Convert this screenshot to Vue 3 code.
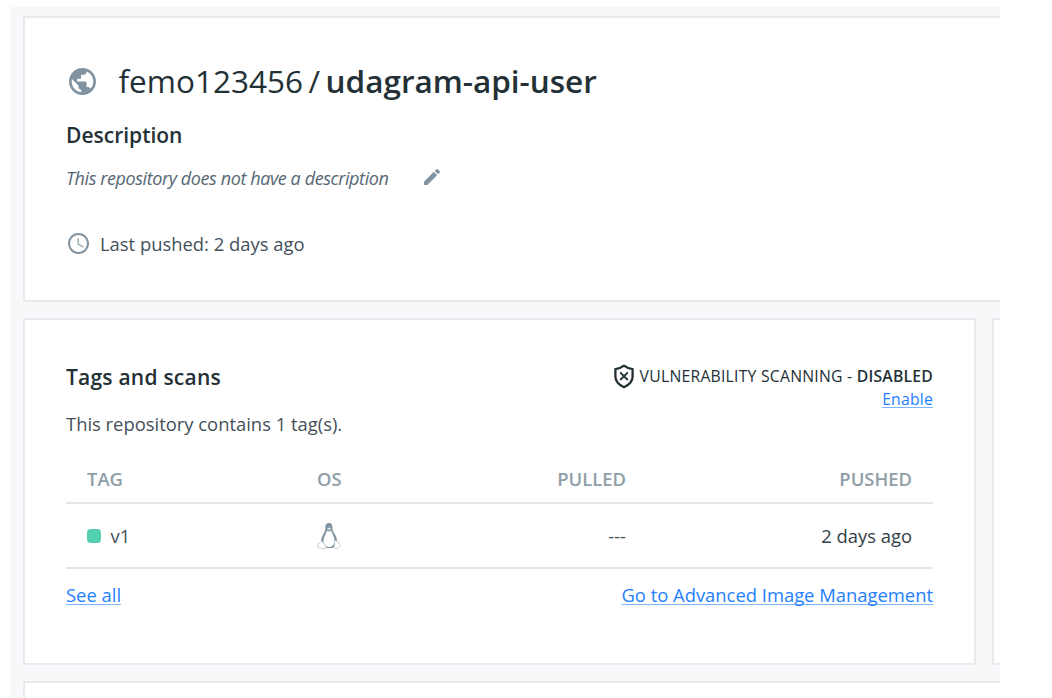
<script setup>
const columns = ['TAG', 'OS', 'PULLED', 'PUSHED']
</script>

<template>
  <main class="page">
    <section class="card overview">
      <h1 class="title">
        <svg class="globe" viewBox="2 2 20 20"><path d="M12 2C6.48 2 2 6.48 2 12s4.48 10 10 10 10-4.48 10-10S17.52 2 12 2zm-1 17.93c-3.95-.49-7-3.85-7-7.93 0-.62.08-1.21.21-1.79L9 15v1c0 1.1.9 2 2 2v1.930zm6.9-2.540c-.26-.81-1-1.39-1.9-1.390h-1v-3c0-.55-.45-1-1-1H8v-2h2c.55 0 1-.45 1-1V7h2c1.100 0 2-.9 2-2v-.41c2.930 1.190 5 4.060 5 7.410 0 2.080-.8 3.970-2.100 5.390z" /></svg>
        <span class="owner">femo123456</span><span class="slash">/</span><span class="repo">udagram-api-user</span>
      </h1>
      <h2 class="heading label"><span>Description</span></h2>
      <div class="description">
        <em>This repository does not have a description</em>
        <svg class="pencil" viewBox="3 3 18 18"><path d="M3 17.25V21h3.75L17.81 9.94l-3.75-3.75L3 17.25zM20.71 7.04c.39-.39.39-1.02 0-1.41l-2.34-2.34c-.39-.39-1.02-.39-1.41 0l-1.83 1.83 3.75 3.75 1.83-1.83z" /></svg>
      </div>
      <div class="pushed">
        <svg class="clock" viewBox="2 2 20 20"><path d="M11.99 2C6.47 2 2 6.48 2 12s4.47 10 9.99 10C17.52 22 22 17.52 22 12S17.52 2 11.99 2zM12 20c-4.42 0-8-3.58-8-8s3.58-8 8-8 8 3.58 8 8-3.58 8-8 8z" /><path class="hands" d="M12.5 7H11v6l5.25 3.15.75-1.23-4.5-2.67z" /></svg>
        <span>Last pushed: 2 days ago</span>
      </div>
    </section>

    <div class="row">
      <section class="card tags">
        <header class="tags-head">
          <h2 class="heading wide"><span>Tags and scans</span></h2>
          <div class="scan">
            <div class="scan-status">
              <svg class="shield" viewBox="0 0 22 25"><path d="M11 1.600c2.500 2 5.500 3 8.600 3.500v7.700c0 5-3.900 8.200-8.600 10.400-4.700-2.200-8.600-5.400-8.600-10.400V5.100C5.500 4.600 8.500 3.600 11 1.600z" /><path class="cross" d="M7.200 8.400l7.600 7.600M14.800 8.400l-7.600 7.600" /></svg>
              <span class="scan-name">VULNERABILITY SCANNING - </span><span class="disabled">DISABLED</span>
            </div>
            <a class="enable">Enable</a>
          </div>
        </header>
        <p class="count"><span>This repository contains 1 tag(s).</span></p>
        <div class="line thead">
          <span v-for="c in columns" :key="c">{{ c }}</span>
        </div>
        <div class="line trow">
          <span class="tag"><i class="dot"></i>v1</span>
          <span class="os">
            <svg class="tux" viewBox="0 0 24 28">
              <path class="body" d="M12 1C9 1 8.200 3.200 8.400 6c.1 2.500-1 4.200-2.300 6.500C4.700 15 3.900 17.500 4 20.500L8.500 26h7.500l4.200-5.500c0-3-.8-5.600-2.300-8-1.500-2.300-2.400-4-2.400-6.500C15.500 3.100 14.800 1 12 1z" />
              <path class="belly" d="M10 8.500c1.500 1.500 3 1 4.200 0 .6 3 3.300 6 3.300 10.500 0 3-2 6-5.500 6s-5.500-3-5.500-6c0-4 2.900-7.500 3.500-10.500z" />
              <path class="face" d="M10 6.700l2-1.300 2.300 1.200-2.200 1.700z" />
              <path class="foot" d="M4.700 18.700l4.200 5.800c.4 1.800-.7 2.800-2.500 2.400L1.400 25.600c-1-.4-.1-1.600-.4-3-.1-1.200.7-1.500 1.800-1.700.7-.2.900-2 1.900-2.200zM18.900 18.700c-1.200-.2-1.500.8-1.500 2v4c0 2 1.300 2.900 3 1.800l2.400-2c1-.8.5-1.400-.4-2.200-.6-.6 0-1.900-1-2.200-.9 0-1.300-1.300-2.500-1.400z" />
            </svg>
          </span>
          <span>---</span>
          <span class="ago">2 days ago</span>
        </div>
        <footer class="links">
          <a class="all">See all</a>
          <a class="manage">Go to Advanced Image Management</a>
        </footer>
      </section>
      <section class="card side"></section>
    </div>
    <section class="card next"></section>
  </main>
</template>

<style>
html, body { background: #fff; overflow: hidden; }
</style>

<style scoped>
.page {
  box-sizing: border-box;
  width: 990px;
  height: 691px;
  margin: 7px 0 0 10px;
  padding: 9px 0 0 13px;
  overflow: hidden;
  background: #f7f8fa;
  color: #445058;
  font: 18.4px/26px "Open Sans", "Noto Sans", sans-serif;
}
.card {
  box-sizing: border-box;
  background: #fff;
  border: 2px solid #e8eaed;
  border-radius: 2px;
}
.overview {
  height: 286px;
  padding: 44px 41px 0;
  border-right: 0;
  border-radius: 2px 0 0 2px;
}
.title {
  display: flex;
  align-items: center;
  height: 38px;
  margin: 0;
  color: #233137;
  font-size: 31.5px;
  font-weight: 400;
  line-height: 38px;
  white-space: nowrap;
}
.title svg, .pencil, .clock { fill: #8193a0; flex: none; }
.globe { width: 27px; height: 27px; margin: 0 22.5px 0 3px; }
.slash { margin: 0 5.5px; }
.repo { font-weight: 600; }
.heading {
  margin: 0;
  color: #233137;
  font-size: 21px;
  font-weight: 600;
  line-height: 30px;
}
.wide { letter-spacing: 0.22px; }
.label { margin-top: 20px; }
.description {
  display: flex;
  align-items: center;
  margin-top: 15px;
  color: #556775;
}
.description em { font-size: 18px; letter-spacing: -0.41px; }
.pencil { width: 16px; height: 16px; margin: -2px 0 0 36px; }
.pushed {
  display: flex;
  align-items: center;
  gap: 11px;
  margin-top: 40px;
}
.clock { width: 21px; height: 21px; margin: -1px 0 0 2px; }
.clock .hands { opacity: 0.75; }
.row { display: flex; gap: 16px; margin-top: 15.5px; }
.tags { flex: none; width: 953px; height: 347px; padding: 42px 41px 0; }
.side { flex: 1; border-right: 0; border-radius: 2px 0 0 2px; }
.next { height: 60px; margin-top: 16px; border-right: 0; }
.tags-head { display: flex; justify-content: space-between; height: 48px; }
.scan { display: flex; flex-direction: column; align-items: flex-end; font-size: 15.75px; line-height: 22px; }
.scan-status { display: flex; align-items: center; height: 29px; margin-bottom: -3px; color: #233137; white-space: pre; }
.shield { width: 22px; height: 25px; margin-right: 5px; fill: none; stroke: #233137; stroke-width: 2.3; stroke-linejoin: round; }
.shield .cross { stroke-width: 1.8; }
.scan-name { letter-spacing: 0.23px; }
.disabled { font-weight: 600; letter-spacing: 0.2px; }
.enable { letter-spacing: 0.2px; }
.count { margin: 0; height: 45px; line-height: 27px; }
.line {
  box-sizing: border-box;
  display: grid;
  grid-template-columns: 230px 116px 1fr 286px;
  align-items: center;
  padding: 2px 21px 0;
  border-bottom: 2px solid #e4e5e6;
}
.line > :nth-child(n + 3) { text-align: right; }
.thead { height: 49px; color: #8f9ea7; font-weight: 600; }
.trow { height: 65px; }
.tag { display: flex; align-items: center; }
.dot { width: 14px; height: 14px; margin-right: 9.5px; border-radius: 4px; background: #53d1af; }
.os { display: flex; }
.tux { width: 24px; height: 28px; }
.tux .body { fill: #8295a2; }
.tux .belly { fill: #fff; }
.tux .face { fill: #dce3e7; }
.tux .foot { fill: #fff; stroke: #b9c3ca; stroke-width: 0.8; }
.ago { color: #344047; }
.links { display: flex; justify-content: space-between; padding-top: 13px; }
a {
  color: #2380ff;
  text-decoration: underline;
  text-decoration-color: #7db4ff;
  text-decoration-thickness: 1px;
  text-underline-offset: 2px;
  text-decoration-skip-ink: none;
}
</style>
